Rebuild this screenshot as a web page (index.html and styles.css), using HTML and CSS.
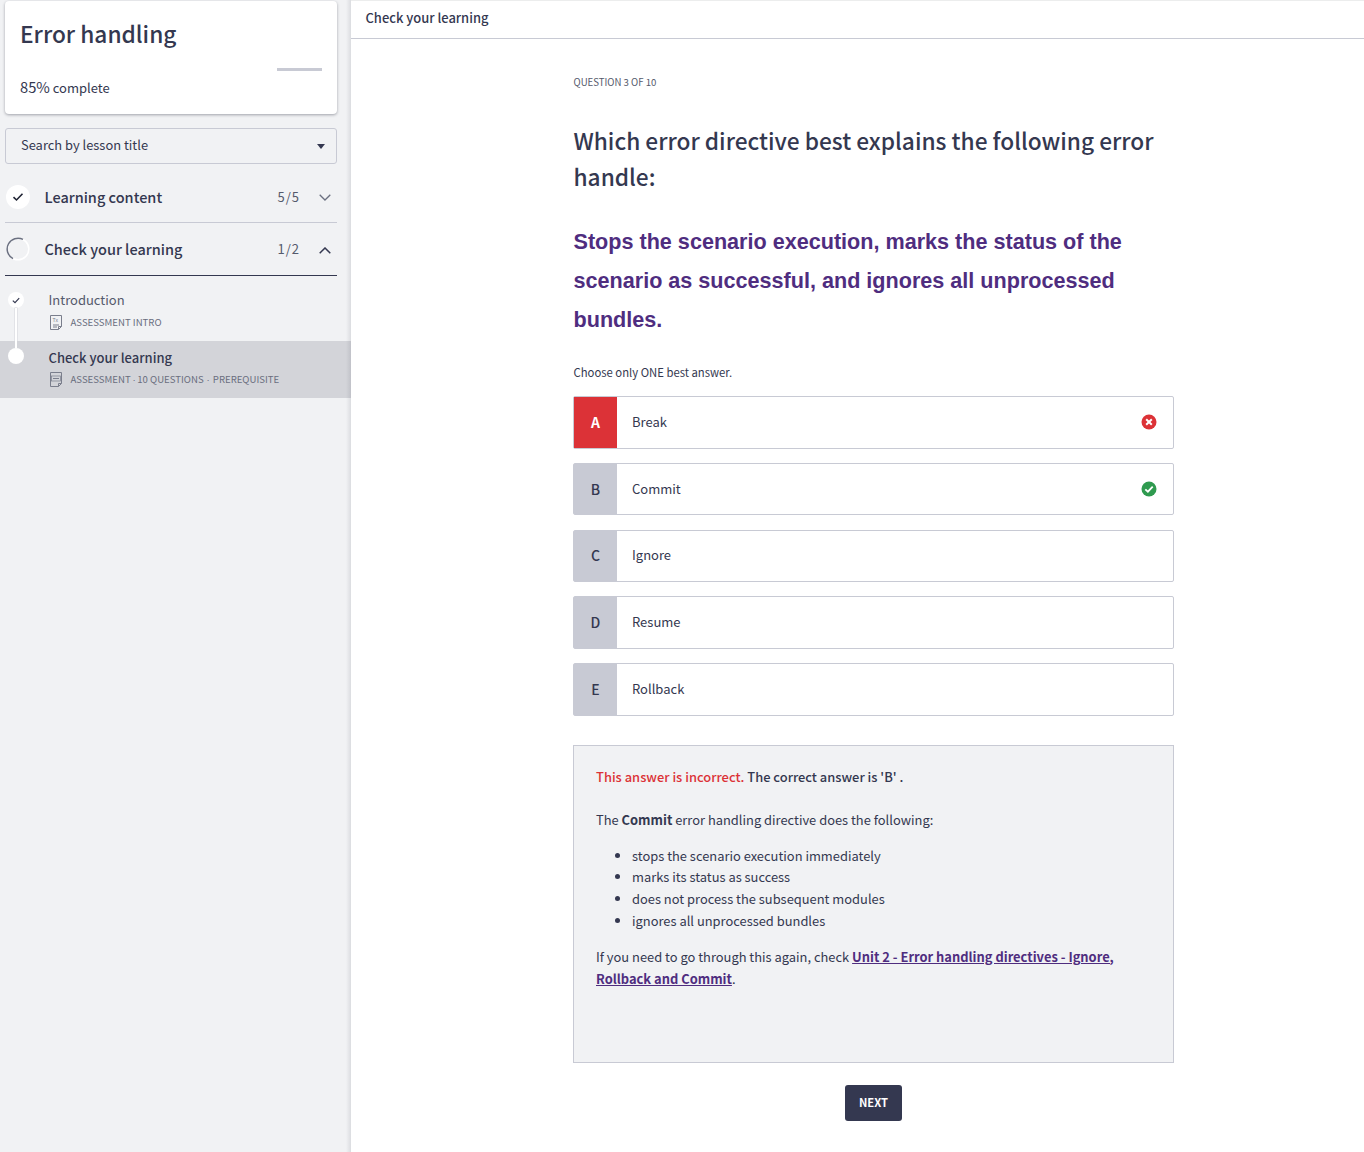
FILE: index.html
```html
<!DOCTYPE html>
<html lang="en">
<head>
<meta charset="utf-8">
<title>Check your learning</title>
<link rel="stylesheet" href="styles.css">
</head>
<body>
<div class="app">
  <aside class="sidebar">
    <div class="course-card">
      <h1 class="course-title">Error handling</h1>
      <div class="progress"><span class="progress-rest"></span></div>
      <div class="progress-label"><span class="pct">85%</span> complete</div>
    </div>
    <div class="search">
      <span>Search by lesson title</span>
      <span class="caret"></span>
    </div>
    <div class="section">
      <span class="sec-status"><svg width="12" height="10" viewBox="0 0 12 10"><path d="M1.5 5.2 4.5 8 10.5 1.8" fill="none" stroke="#1f2333" stroke-width="1.6"/></svg></span>
      <span class="sec-title">Learning content</span>
      <span class="sec-count">5/5</span>
      <svg class="chev" width="12" height="7" viewBox="0 0 12 7"><path d="M.7.7 6 6 11.300.7" fill="none" stroke="#6b7080" stroke-width="1.300"/></svg>
    </div>
    <div class="section open">
      <svg class="sec-ring" width="24" height="24" viewBox="0 0 24 24"><circle cx="12" cy="12" r="10.800" fill="none" stroke="#fff" stroke-width="1.500"/><path d="M17 2.400A10.800 10.800 0 0 0 7 21.600" fill="none" stroke="#6b7080" stroke-width="1.500"/></svg>
      <span class="sec-title light">Check your learning</span>
      <span class="sec-count">1/2</span>
      <svg class="chev up" width="12" height="7" viewBox="0 0 12 7"><path d="M.7 6.300 6 1l5.300 5.300" fill="none" stroke="#343850" stroke-width="1.500"/></svg>
    </div>
    <div class="lesson">
      <span class="dot small"><svg width="8" height="7" viewBox="0 0 8 7"><path d="M.8 3.6 3 5.6 7.2 1.2" fill="none" stroke="#343850" stroke-width="1.2"/></svg></span>
      <span class="rail"></span>
      <div class="lesson-name">Introduction</div>
      <div class="lesson-meta">
        <svg class="doc" width="12" height="15" viewBox="0 0 12 15"><path d="M.5.5h11v11l-3 3H.5zM8.500 14.500v-3h3M3 10h6M3 12h4" fill="none" stroke="#7a7e8c"/><text x="2.500" y="7" class="doc-text">Tx</text></svg>
        <span>ASSESSMENT INTRO</span>
      </div>
    </div>
    <div class="lesson active">
      <span class="dot"></span>
      <div class="lesson-name">Check your learning</div>
      <div class="lesson-meta">
        <svg class="doc" width="12" height="15" viewBox="0 0 12 15"><path d="M.5.5h11v11l-3 3H.5zM8.500 14.500v-3h3" fill="none" stroke="#7a7e8c"/><rect x="1.500" y="4" width="9" height="5" fill="none" stroke="#7a7e8c" stroke-width=".7"/><path d="M3 6.500h6" stroke="#7a7e8c"/></svg>
        <span>ASSESSMENT<span class="sep">·</span>10 QUESTIONS<span class="sep wide">·</span>PREREQUISITE</span>
      </div>
    </div>
  </aside>
  <main class="main">
    <header class="topbar">Check your learning</header>
    <div class="quiz">
      <div class="q-count">QUESTION 3 OF 10</div>
      <h2 class="q-title">Which error directive best explains the following error handle:</h2>
      <h3 class="q-body">Stops the scenario execution, marks the status of the scenario as successful, and ignores all unprocessed bundles.</h3>
      <p class="q-hint">Choose only ONE best answer.</p>
      <ul class="answers">
        <li class="answer wrong">
          <span class="letter">A</span><span class="answer-text">Break</span>
          <svg class="mark" width="16" height="16" viewBox="0 0 16 16"><circle cx="8" cy="8" r="7.500" fill="#dc3237"/><path d="M5.200 5.200l5.600 5.600M10.800 5.200l-5.600 5.600" stroke="#fff" stroke-width="2"/></svg>
        </li>
        <li class="answer">
          <span class="letter">B</span><span class="answer-text">Commit</span>
          <svg class="mark" width="16" height="16" viewBox="0 0 16 16"><circle cx="8" cy="8" r="7.500" fill="#2f9a4f"/><path d="M4.300 8.300l2.600 2.400 4.800-5" fill="none" stroke="#fff" stroke-width="1.800"/></svg>
        </li>
        <li class="answer"><span class="letter">C</span><span class="answer-text">Ignore</span></li>
        <li class="answer"><span class="letter">D</span><span class="answer-text">Resume</span></li>
        <li class="answer"><span class="letter">E</span><span class="answer-text">Rollback</span></li>
      </ul>
      <section class="feedback">
        <p class="fb-result"><span class="bad">This answer is incorrect.</span> The correct answer is 'B' .</p>
        <p class="fb-lead">The <b>Commit</b> error handling directive does the following:</p>
        <ul class="fb-list">
          <li>stops the scenario execution immediately</li>
          <li>marks its status as success</li>
          <li>does not process the subsequent modules</li>
          <li>ignores all unprocessed bundles</li>
        </ul>
        <p class="fb-link">If you need to go through this again, check <a href="#">Unit 2 - Error handling directives - Ignore, Rollback and Commit</a>.</p>
      </section>
      <div class="actions"><button class="next">NEXT</button></div>
    </div>
  </main>
</div>
</body>
</html>
```
FILE: styles.css
```css
* { box-sizing: border-box; }
html, body { margin: 0; padding: 0; }
body {
  font-family: "Noto Sans CJK SC", "Noto Sans", sans-serif;
  color: #343850;
  background: #fff;
}
.app { display: flex; min-height: 1152px; }
.sidebar {
  width: 351px;
  flex: none;
  background: #f1f2f4;
  position: relative;
  padding-top: 1px;
}
.sidebar::after {
  content: "";
  position: absolute;
  top: 0;
  right: 0;
  bottom: 0;
  width: 5px;
  background: linear-gradient(to right, rgba(60, 64, 80, 0), rgba(60, 64, 80, .12));
  pointer-events: none;
}
.course-card {
  margin: 0 14px 0 5px;
  height: 113px;
  background: #fff;
  border-radius: 4px;
  box-shadow: 0 1px 3px rgba(40, 44, 60, .4);
  padding: 13.5px 15px 0;
}
.course-title { margin: 0; font-size: 22.7px; line-height: 38px; font-weight: 500; }
.progress { margin-top: 15.5px; height: 3px; display: flex; justify-content: flex-end; }
.progress-rest { width: 45px; background: #c8cad4; }
.progress-label { margin-top: 5px; font-size: 13px; line-height: 22px; }
.pct { font-size: 14.7px; }
.search {
  margin: 14px 14px 0 5px;
  height: 36px;
  border: 1px solid #c8cad4;
  border-radius: 3px;
  padding: 0 15px 3px;
  display: flex;
  align-items: center;
  justify-content: space-between;
  font-size: 12.9px;
}
.caret { width: 0; height: 0; border: 4px solid transparent; border-top: 5px solid #343850; border-bottom: 0; margin: 3px -4px 0 0; }
.section {
  margin: 8px 14px 0 5px;
  height: 51px;
  display: flex;
  align-items: center;
  border-bottom: 1px solid #c8cad4;
}
.section + .section { margin-top: 0; height: 53px; border-bottom-color: #343850; }
.sec-status {
  width: 24px; height: 24px; margin-left: 1px; border-radius: 50%;
  background: #fff; display: flex; align-items: center; justify-content: center;
}
.sec-ring { margin-left: 1px; }
.sec-title { margin-left: 14.5px; font-size: 14.5px; font-weight: 500; flex: 1; padding-bottom: 1px; }
.sec-title.light { font-weight: 500; padding-bottom: 2px; }
.sec-count { font-size: 13px; letter-spacing: 1px; color: #555a6c; margin-right: 19px; padding-bottom: 1px; }
.chev { margin-right: 6px; }
.chev.up { margin-top: 2px; }
.lesson { position: relative; height: 57px; padding: 14px 0 0 48.5px; }
.section + .lesson { margin-top: 0; height: 65px; padding-top: 14px; }
.lesson.active { background: #d3d4d9; height: 57px; padding-top: 7px; }
.dot {
  position: absolute; left: 8px; top: 7px; width: 16px; height: 16px; border-radius: 50%;
  background: #fff; display: flex; align-items: center; justify-content: center; z-index: 1;
}
.dot.small { top: 16px; }
.rail { position: absolute; left: 15px; top: 32px; width: 2px; height: 40px; background: #fff; z-index: 1; box-shadow: 0 0 0 .5px #d3d4d9; }
.lesson-name { font-size: 13px; line-height: 20px; color: #555a6c; }
.active .lesson-name { color: #343850; font-weight: 500; }
.lesson-meta { display: flex; align-items: center; gap: 9px; margin-top: 5px; font-size: 9.6px; line-height: 15px; color: #6a6e7e; }
.active .lesson-meta { margin-top: 4px; }
.doc { margin-left: 1px; }
.sep { font-family: "Liberation Sans", sans-serif; margin: 0 1.7px; }
.sep.wide { margin: 0 3px; }
.doc-text { font-size: 5px; fill: #7a7e8c; font-family: "Liberation Sans", sans-serif; }
.main { flex: 1; min-width: 0; }
.topbar { height: 39px; padding: 0 14.5px; border-top: 1px solid #eceded; border-bottom: 1px solid #c8cad4; font-size: 12.95px; line-height: 34px; font-weight: 500; }
.quiz { width: 601px; margin-left: 222px; }
.q-count { margin-top: 35px; font-size: 9.65px; line-height: 16px; color: #555a6c; }
.q-count, .q-title, .q-body, .q-hint { padding-left: .5px; }
.q-title { margin: 32.5px 0 0; font-size: 22.7px; line-height: 36.5px; font-weight: 500; }
.q-body { margin: 26.5px 0 0; font-family: "Liberation Sans", sans-serif; font-size: 21.6px; line-height: 39px; font-weight: 700; color: #4f2d7f; }
.q-hint { margin: 23px 0 0; font-size: 11.3px; line-height: 20px; }
.answers { list-style: none; margin: 14px 0 0; padding: 0; }
.answer {
  height: 52.5px; margin-bottom: 14.25px; display: flex; align-items: center;
  border: 1px solid #c8cad4; border-radius: 2px; background: #fff; font-size: 13px;
}
.answer:last-child { margin-bottom: 0; }
.letter { width: 43px; align-self: stretch; background: #c8cad4; display: flex; align-items: center; justify-content: center; font-weight: 500; font-size: 14px; padding-bottom: 1px; }
.wrong .letter { background: #dc3237; color: #fff; font-weight: 700; }
.answer-text { margin-left: 15px; flex: 1; padding-bottom: 2px; }
.mark { margin-right: 16.5px; }
.feedback { margin-top: 29.25px; height: 318px; background: #f1f2f4; border: 1px solid #c8cad4; padding: 20px 22px; font-size: 12.9px; line-height: 22px; }
.feedback p { margin: 0; }
.fb-result { font-weight: 500; }
.bad { color: #dc3237; }
.fb-lead { margin-top: 21px !important; }
.fb-list { margin: 14px 0; padding-left: 36px; line-height: 21.7px; }
.fb-link a { color: #4f2d7f; font-weight: 700; }
.actions { display: flex; justify-content: center; margin-top: 22px; }
.next { width: 57px; height: 36px; border: 0; border-radius: 3px; background: #343850; color: #fff; font: 700 11.2px "Noto Sans CJK SC", sans-serif; padding: 0 0 1px; }
```
